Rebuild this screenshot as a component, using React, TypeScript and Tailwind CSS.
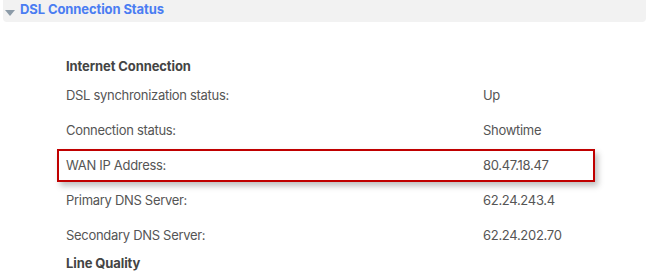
const rows = [
  { label: 'DSL synchronization status:', value: 'Up' },
  { label: 'Connection status:', value: 'Showtime' },
  { label: 'WAN IP Address:', value: '80.47.18.47', active: true },
  { label: 'Primary DNS Server:', value: '62.24.243.4' },
  { label: 'Secondary DNS Server:', value: '62.24.202.70' },
];

export default function App() {
  return (
    <div className="w-[649px] h-[275px] bg-white overflow-hidden text-[13px] text-[#555] tracking-[-0.3px]" style={{ fontFamily: 'Inter, "Liberation Sans", sans-serif' }}>
      <div className="mx-[3px] h-[22px] bg-[#f2f2f2] rounded-b-[4px] flex items-center pl-[2px]">
        <svg width="10" height="6" viewBox="0 0 10 6" className="mt-[4px] mr-[5px]">
          <path d="M0 0 L10 0 L5 6 Z" fill="#8c9ba8" />
        </svg>
        <span className="font-bold tracking-[-0.1px] text-[#4a7df2] -mt-[3px]">DSL Connection Status</span>
      </div>

      <div className="pt-[35px] ml-[57px] w-[538px] flex flex-col gap-[2px]">
        <div className="h-[20px] flex items-center pl-[9px] font-bold tracking-[-0.1px] text-[#444]">Internet Connection</div>
        {rows.map((r) => (
          <div
            key={r.label}
            className={
              r.active
                ? 'h-[33px] grid grid-cols-[417px_1fr] items-center pl-[7px] border-2 border-[#c00000] shadow-[3px_4px_6px_rgba(0,0,0,0.25)]'
                : 'h-[33px] grid grid-cols-[417px_1fr] items-center pl-[7px] border-2 border-transparent'
            }
          >
            <span>{r.label}</span>
            <span>{r.value}</span>
          </div>
        ))}
        <div className="h-[20px] flex items-center pl-[9px] font-bold tracking-[-0.1px] text-[#444]">Line Quality</div>
      </div>
    </div>
  );
}
